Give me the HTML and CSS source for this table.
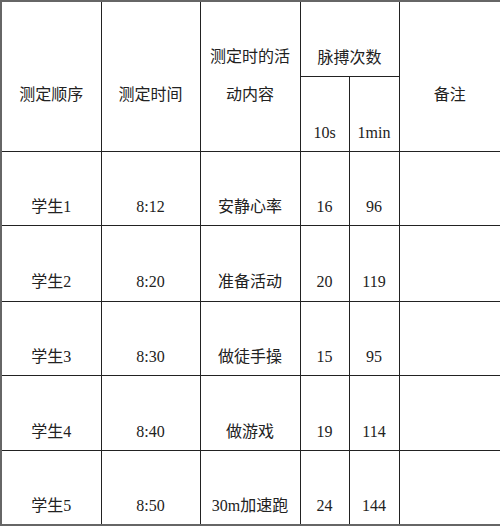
FILE: index.html
```html
<!DOCTYPE html>
<html lang="zh">
<head>
<meta charset="utf-8">
<link rel="stylesheet" href="styles.css">
</head>
<body>
<table class="grid">
  <colgroup>
    <col class="c1"><col class="c2"><col class="c3"><col class="c4"><col class="c5"><col class="c6">
  </colgroup>
  <tr class="h1">
    <td rowspan="2" class="hd">测定顺序</td>
    <td rowspan="2" class="hd">测定时间</td>
    <td rowspan="2" class="two">测定时的活<br>动内容</td>
    <td colspan="2">脉搏次数</td>
    <td rowspan="2" class="hd">备注</td>
  </tr>
  <tr class="h2">
    <td>10s</td>
    <td>1min</td>
  </tr>
  <tr class="r1"><td>学生1</td><td>8:12</td><td>安静心率</td><td>16</td><td>96</td><td></td></tr>
  <tr class="r2"><td>学生2</td><td>8:20</td><td>准备活动</td><td>20</td><td>119</td><td></td></tr>
  <tr class="r3"><td>学生3</td><td>8:30</td><td>做徒手操</td><td>15</td><td>95</td><td></td></tr>
  <tr class="r4"><td>学生4</td><td>8:40</td><td>做游戏</td><td>19</td><td>114</td><td></td></tr>
  <tr class="r5"><td>学生5</td><td>8:50</td><td>30m加速跑</td><td>24</td><td>144</td><td></td></tr>
</table>
</body>
</html>
```
FILE: styles.css
```css
html, body {
  margin: 0;
  padding: 0;
  background: #ffffff;
}
.grid {
  border-collapse: collapse;
  table-layout: fixed;
  width: 500px;
  font-family: "Liberation Serif", "Noto Sans CJK SC", serif;
  font-size: 16px;
  color: #222;
  border: 2px solid #666;
}
.c1 { width: 100px; }
.c2 { width: 99px; }
.c3 { width: 100px; }
.c4 { width: 49px; }
.c5 { width: 50px; }
.c6 { width: 102px; }
.grid td {
  border: 1.5px solid #222;
  text-align: center;
  vertical-align: middle;
  padding: 38px 0 0 0;
  line-height: 20px;
  overflow: hidden;
  white-space: nowrap;
}
.grid td.two {
  padding: 0;
  line-height: 38px;
}
.h1 { height: 75px; }
.h2 { height: 75px; }
.r1 { height: 74px; }
.r2 { height: 76px; }
.r3 { height: 74px; }
.r4 { height: 75px; }
.r5 { height: 75px; }
```
